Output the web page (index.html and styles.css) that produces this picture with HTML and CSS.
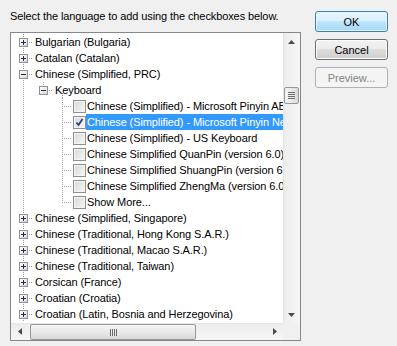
FILE: index.html
```html
<!DOCTYPE html>
<html lang="en">
<head>
    <meta charset="UTF-8">
    <title>Add Input Language</title>
    <link rel="stylesheet" href="styles.css">
</head>
<body>
    <div class="dialog">
        <div class="main">
            <p class="prompt">Select the language to add using the checkboxes below.</p>

            <div class="tree-box">
                <div class="tree">
                    <div class="row"><span class="cell tee"><span class="exp"><svg width="7" height="7"><path d="M1 3.5h5M3.5 1v5"/></svg></span></span><span class="label">Bulgarian (Bulgaria)</span></div>
                    <div class="row"><span class="cell tee"><span class="exp"><svg width="7" height="7"><path d="M1 3.5h5M3.5 1v5"/></svg></span></span><span class="label">Catalan (Catalan)</span></div>
                    <div class="row"><span class="cell tee"><span class="exp"><svg width="7" height="7"><path d="M1 3.5h5"/></svg></span></span><span class="label">Chinese (Simplified, PRC)</span></div>
                    <div class="row"><span class="cell vert"></span><span class="cell elbow"><span class="exp"><svg width="7" height="7"><path d="M1 3.5h5"/></svg></span></span><span class="label kb">Keyboard</span></div>

                    <!-- keyboard layouts -->
                    <div class="row item"><span class="cell vert"></span><span class="cell"></span><span class="cell narrow tee"></span><span class="check"></span><span class="label">Chinese (Simplified) - Microsoft Pinyin ABC Input Style</span></div>
                    <div class="row item selected"><span class="cell vert"></span><span class="cell"></span><span class="cell narrow tee"></span><span class="check"><svg width="11" height="11"><path d="M2.5 5.5l2 2.5l4-6" /></svg></span><span class="label">Chinese (Simplified) - Microsoft Pinyin New Experience Input Style</span></div>
                    <div class="row item"><span class="cell vert"></span><span class="cell"></span><span class="cell narrow tee"></span><span class="check"></span><span class="label">Chinese (Simplified) - US Keyboard</span></div>
                    <div class="row item"><span class="cell vert"></span><span class="cell"></span><span class="cell narrow tee"></span><span class="check"></span><span class="label">Chinese Simplified QuanPin (version 6.0)</span></div>
                    <div class="row item"><span class="cell vert"></span><span class="cell"></span><span class="cell narrow tee"></span><span class="check"></span><span class="label">Chinese Simplified ShuangPin (version 6.0)</span></div>
                    <div class="row item"><span class="cell vert"></span><span class="cell"></span><span class="cell narrow tee"></span><span class="check"></span><span class="label">Chinese Simplified ZhengMa (version 6.0)</span></div>
                    <div class="row item"><span class="cell vert"></span><span class="cell"></span><span class="cell narrow elbow"></span><span class="check"></span><span class="label">Show More...</span></div>

                    <div class="row"><span class="cell tee"><span class="exp"><svg width="7" height="7"><path d="M1 3.5h5M3.5 1v5"/></svg></span></span><span class="label">Chinese (Simplified, Singapore)</span></div>
                    <div class="row"><span class="cell tee"><span class="exp"><svg width="7" height="7"><path d="M1 3.5h5M3.5 1v5"/></svg></span></span><span class="label">Chinese (Traditional, Hong Kong S.A.R.)</span></div>
                    <div class="row"><span class="cell tee"><span class="exp"><svg width="7" height="7"><path d="M1 3.5h5M3.5 1v5"/></svg></span></span><span class="label">Chinese (Traditional, Macao S.A.R.)</span></div>
                    <div class="row"><span class="cell tee"><span class="exp"><svg width="7" height="7"><path d="M1 3.5h5M3.5 1v5"/></svg></span></span><span class="label">Chinese (Traditional, Taiwan)</span></div>
                    <div class="row"><span class="cell tee"><span class="exp"><svg width="7" height="7"><path d="M1 3.5h5M3.5 1v5"/></svg></span></span><span class="label">Corsican (France)</span></div>
                    <div class="row"><span class="cell tee"><span class="exp"><svg width="7" height="7"><path d="M1 3.5h5M3.5 1v5"/></svg></span></span><span class="label">Croatian (Croatia)</span></div>
                    <div class="row"><span class="cell tee"><span class="exp"><svg width="7" height="7"><path d="M1 3.5h5M3.5 1v5"/></svg></span></span><span class="label">Croatian (Latin, Bosnia and Herzegovina)</span></div>
                </div>

                <div class="vscroll">
                    <span class="sb-btn"><svg width="7" height="4"><path d="M3.5 0L7 4H0z"/></svg></span>
                    <span class="vthumb"><svg width="7" height="7"><path d="M0 0.5h7M0 2.5h7M0 4.5h7M0 6.5h7"/></svg></span>
                    <span class="sb-track"></span>
                    <span class="sb-btn"><svg width="7" height="4"><path d="M0 0h7L3.5 4z"/></svg></span>
                </div>
                <div class="hscroll">
                    <span class="sb-btn"><svg width="4" height="7"><path d="M4 0v7L0 3.5z"/></svg></span>
                    <span class="hthumb"><svg width="7" height="7"><path d="M0.5 0v7M2.5 0v7M4.5 0v7M6.5 0v7"/></svg></span>
                    <span class="sb-track"></span>
                    <span class="sb-btn"><svg width="4" height="7"><path d="M0 0l4 3.5L0 7z"/></svg></span>
                </div>
                <div class="corner"></div>
            </div>
        </div>

        <div class="buttons">
            <button class="btn btn-default">OK</button>
            <button class="btn">Cancel</button>
            <button class="btn" disabled>Preview...</button>
        </div>
    </div>
</body>
</html>
```

FILE: styles.css
```css
:root {
    --dv: repeating-linear-gradient(to bottom, #a0a0a0 0 1px, transparent 1px 2px);
    --dh: repeating-linear-gradient(to right, #a0a0a0 0 1px, transparent 1px 2px);
}
body {
    margin: 0;
    background: #f0f0f0;
    font-family: "Liberation Sans", Arial, sans-serif;
    font-size: 11px;
    letter-spacing: -0.1px;
    color: #000;
}
.dialog {
    display: flex;
    align-items: flex-start;
}
.main {
    padding: 8px 0 0 10px;
}
.prompt {
    margin: 0 0 8px;
    line-height: 16px;
}
.tree-box {
    width: 291px;
    height: 309px;
    box-sizing: border-box;
    border: 1px solid #828790;
    background: #fff;
    display: grid;
    grid-template-columns: 272px 17px;
    grid-template-rows: 290px 17px;
}
.tree {
    overflow: hidden;
    padding: 1px 0 0 2px;
}
.row {
    display: flex;
    height: 16px;
    line-height: 16px;
    white-space: nowrap;
}
.cell {
    --x: 10px;
    flex: none;
    width: 20px;
    height: 16px;
}
.cell.narrow {
    --x: 9px;
    width: 19px;
}
.vert {
    background: var(--dv) var(--x) 0 / 1px 16px no-repeat;
}
.tee {
    background: var(--dv) var(--x) 0 / 1px 16px no-repeat,
                var(--dh) var(--x) 8px / 10px 1px no-repeat;
}
.elbow {
    background: var(--dv) var(--x) 0 / 1px 9px no-repeat,
                var(--dh) var(--x) 8px / 10px 1px no-repeat;
}
.exp {
    display: block;
    width: 7px;
    height: 7px;
    margin: 4px 0 0 6px;
    border: 1px solid #919191;
    background: linear-gradient(135deg, #ffffff, #d8d8d8);
}
.exp svg {
    display: block;
    stroke: #1f2a5c;
    stroke-width: 1;
}
.label {
    padding: 0 2px;
}
.kb {
    background: var(--dv) 9px 11px / 1px 5px no-repeat;
}
.item .label {
    padding-left: 1px;
}
.selected .label {
    background: #3399ff;
    color: #fff;
}
.check {
    flex: none;
    width: 13px;
    height: 13px;
    margin: 2px 0 0 1px;
    box-sizing: border-box;
    border: 1px solid #8f8f8f;
    background: linear-gradient(135deg, #d6d8dc, #f8f8f8);
    box-shadow: inset 0 0 0 1px #f4f4f4;
}
.check svg {
    display: block;
    fill: none;
    stroke: #2d3f7d;
    stroke-width: 1.8;
}
.vscroll {
    grid-column: 2;
    grid-row: 1;
    display: flex;
    flex-direction: column;
    background: linear-gradient(to right, #e3e3e3, #eeeeee 2px, #f6f6f6);
}
.hscroll {
    grid-column: 1;
    grid-row: 2;
    display: flex;
    background: linear-gradient(#e3e3e3, #eeeeee 2px, #f6f6f6);
}
.corner {
    grid-column: 2;
    grid-row: 2;
    background: #f0f0f0;
}
.sb-btn {
    flex: none;
    width: 17px;
    height: 17px;
    display: flex;
    align-items: center;
    justify-content: center;
}
.sb-btn svg {
    fill: #4a4a4a;
}
.sb-track {
    flex: 1;
}
.vthumb, .hthumb {
    flex: none;
    box-sizing: border-box;
    border: 1px solid #979797;
    border-radius: 2px;
    display: flex;
    align-items: center;
    justify-content: center;
}
.vthumb {
    height: 17px;
    margin: 37px 1px 0;
    background: linear-gradient(to right, #f4f4f4, #e9e9e9 50%, #d8d8d8);
}
.hthumb {
    width: 166px;
    height: 16px;
    margin: 1px 0 0 2px;
    background: linear-gradient(#f4f4f4, #e9e9e9 50%, #d8d8d8);
}
.vthumb svg, .hthumb svg {
    stroke: #6c6c6c;
}
.buttons {
    display: flex;
    flex-direction: column;
    gap: 7px;
    padding: 11px 0 0 14px;
}
.btn {
    width: 73px;
    height: 21px;
    padding: 0;
    font-family: "Liberation Sans", Arial, sans-serif;
    font-size: 11px;
    color: #000;
    border: 1px solid #707070;
    border-radius: 3px;
    background: linear-gradient(#f2f2f2 0, #ebebeb 45%, #dddddd 50%, #cfcfcf);
    box-shadow: inset 0 0 0 1px #fbfbfb;
}
.btn-default {
    border-color: #3c7fb1;
    background: linear-gradient(#eaf6fd 0, #d9f0fc 45%, #bee6fd 50%, #a7d9f5);
    box-shadow: inset 0 0 0 1px #e6f5fd;
}
.btn:disabled {
    border-color: #adb2b5;
    background: #f4f4f4;
    color: #838383;
    box-shadow: none;
}
```
